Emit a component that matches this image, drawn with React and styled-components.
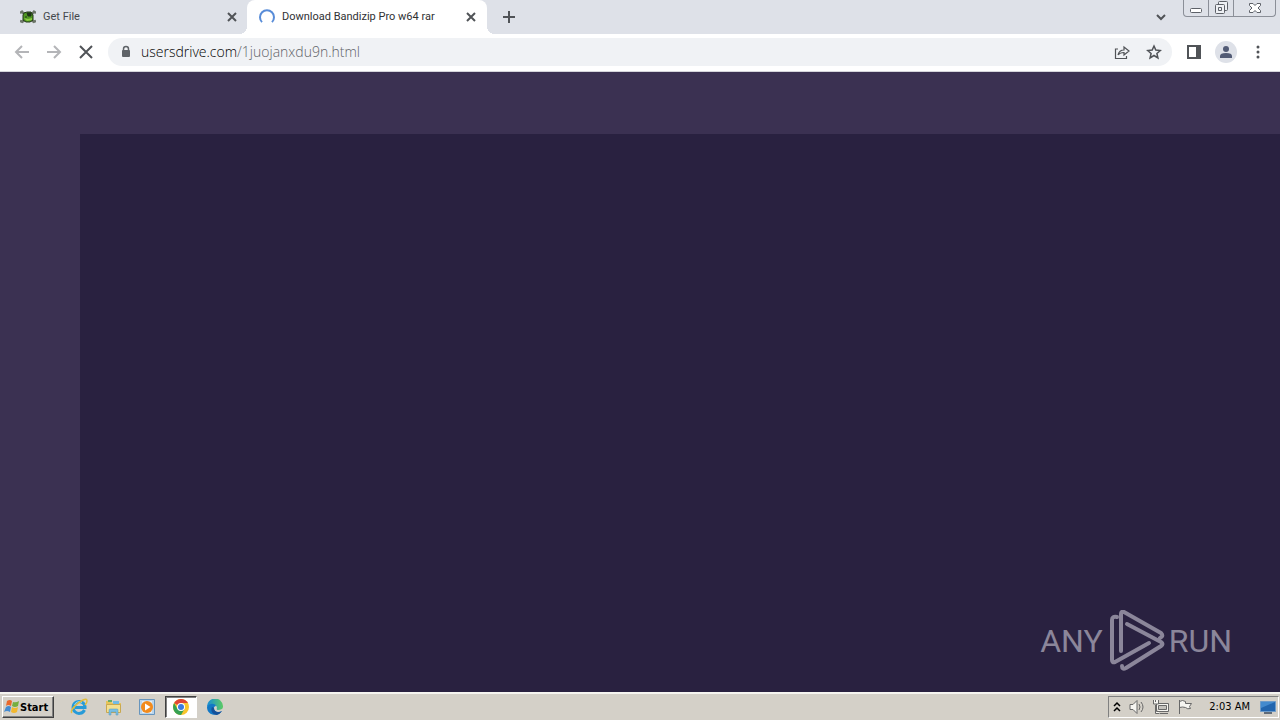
import React from "react";
import styled, { createGlobalStyle } from "styled-components";

const Global = createGlobalStyle`
  *, *::before, *::after { box-sizing: border-box; }
  body { margin: 0; font-family: "DejaVu Sans Condensed", "DejaVu Sans", sans-serif; font-size: 11px; }
  button { font: inherit; color: inherit; border: 0; padding: 0; background: transparent; }
  svg { display: block; flex: none; }
`;

const Desktop = styled.div`
  display: flex;
  flex-direction: column;
  min-height: 100vh;
  background: #292140;
`;

const TabStrip = styled.div`
  display: flex;
  height: 34px;
  background: #dee1e8;
`;

const Tab = styled.div`
  position: relative;
  display: flex;
  align-items: center;
  flex: 0 1 ${(p) => (p.$active ? 240 : 247)}px;
  min-width: 0;
  padding: 0 ${(p) => (p.$active ? 8 : 7)}px 0 ${(p) => (p.$active ? 12 : 20)}px;
  gap: 7px;
  color: ${(p) => (p.$active ? "#303134" : "#45484c")};
  background: ${(p) => (p.$active ? "#fff" : "transparent")};
  border-radius: 8px 8px 0 0;
  &::before, &::after {
    content: "";
    display: ${(p) => (p.$active ? "block" : "none")};
    position: absolute;
    bottom: 0;
    width: 8px;
    height: 8px;
  }
  &::before { left: -8px; background: radial-gradient(circle at 0 0, transparent 8px, #fff 8px); }
  &::after { right: -8px; background: radial-gradient(circle at 100% 0, transparent 8px, #fff 8px); }
`;

const TabTitle = styled.span`
  flex: 1;
  overflow: hidden;
  white-space: nowrap;
  font-family: Roboto, sans-serif;
  font-size: 11px;
  line-height: 16px;
`;

const IconButton = styled.button`
  display: grid;
  place-items: center;
  flex: none;
  width: ${(p) => p.$size || 16}px;
  height: ${(p) => p.$size || 16}px;
`;

const NewTab = styled(IconButton)`
  margin: 3px 0 0 8px;
`;

const TabSearch = styled(IconButton)`
  margin: 3px 8px 0 auto;
`;

const WindowControls = styled.div`
  display: flex;
  align-self: flex-start;
  height: 17px;
  margin-right: 4px;
  color: #5d6168;
  border: 1px solid #8b8f98;
  border-top: 0;
  border-radius: 0 0 4px 4px;
`;

const WindowButton = styled.button`
  display: grid;
  place-items: center;
  width: ${(p) => p.$width}px;
  & + & { border-left: 1px solid #8b8f98; }
`;

const Toolbar = styled.div`
  display: flex;
  align-items: center;
  height: 38px;
  padding: 0 6px 2px;
  background: #fff;
  border-bottom: 1px solid #d5d5db;
`;

const AddressBar = styled.div`
  display: flex;
  align-items: center;
  flex: 1;
  height: 28px;
  margin: 0 6px;
  padding: 0 2px 0 12px;
  border-radius: 14px;
  background: #f0f2f5;
`;

const Address = styled.a`
  flex: 1;
  margin-left: 9px;
  color: #5f6368;
  font-family: "Open Sans", sans-serif;
  font-size: 14px;
  font-weight: 300;
  line-height: 20px;
  text-decoration: none;
`;

const Host = styled.span`
  color: #000;
`;

const Avatar = styled.button`
  display: grid;
  place-items: center;
  width: 22px;
  height: 22px;
  margin: 0 5px;
  border-radius: 50%;
  background: #dee1e8;
`;

const Page = styled.main`
  position: relative;
  flex: 1;
  padding: 62px 0 0 80px;
  display: flex;
  background: #3b3152;
`;

const PageBody = styled.section`
  flex: 1;
  background: #292140;
`;

const Watermark = styled.div`
  position: absolute;
  right: 48px;
  bottom: 20px;
  display: flex;
  align-items: center;
  gap: 4px;
  color: #8b869a;
  font-family: Roboto, "Liberation Sans", sans-serif;
  font-size: 32px;
  line-height: 62px;
`;

const Taskbar = styled.footer`
  display: flex;
  align-items: center;
  height: 28px;
  padding: 0 1px 0 2px;
  color: #000;
  background: #d4d0c8;
  border-top: 2px solid #f5f4f0;
`;

const StartButton = styled.button`
  display: flex;
  align-items: center;
  width: 52px;
  height: 22px;
  padding: 0 1px;
  font-family: "DejaVu Sans Condensed", sans-serif;
  font-size: 11px;
  font-weight: 700;
  border: 1px solid;
  border-color: #fff #404040 #404040 #fff;
  box-shadow: inset -1px -1px 0 #808080;
`;

const Launchers = styled.nav`
  display: flex;
  gap: 2px;
  margin-left: 9px;
`;

const Launcher = styled.button`
  display: grid;
  place-items: center;
  width: 32px;
  height: 22px;
  ${(p) =>
    p.$pressed &&
    "background: #fff; border: 1px solid; border-color: #404040 #fff #fff #404040; box-shadow: inset 1px 1px 0 #808080;"}
`;

const Tray = styled.div`
  display: flex;
  align-items: center;
  height: 22px;
  margin-left: auto;
  padding: 0 2px 0 4px;
  gap: 8px;
  border: 1px solid;
  border-color: #808080 #fff #fff #808080;
`;

const Clock = styled.time`
  margin: 0 2px 0 8px;
  font-family: "DejaVu Sans Condensed", sans-serif;
  font-size: 11px;
  line-height: 16px;
  white-space: nowrap;
`;

const Line = ({ d, size = 16, color = "#505357", width = 2, ...rest }) => (
  <svg width={size} height={size} viewBox={`0 0 ${size} ${size}`} fill="none" stroke={color} strokeWidth={width} {...rest}>
    <path d={d} />
  </svg>
);

const Frog = () => (
  <svg width="16" height="16" viewBox="0 0 16 16">
    <path d="M2 3l4 3M14 3l-4 3M2 13l4-3M14 13l-4-3M0 4l3-2M13 2l3 2M0 12l3 1M13 13l3-1" stroke="#6c7568" strokeWidth="2.5" />
    <path d="M4 4L7 3h4l2 3v5l-3 2H6l-3-2V6z" fill="#4f9720" stroke="#243719" />
    <path d="M4 9l3 3 5-1v-2l-4 1z" fill="#8ccc41" />
    <path d="M7 4h4v3H8zM5 8h2" fill="#1f3318" stroke="#1f3318" />
  </svg>
);

const Spinner = () => (
  <svg width="16" height="16" viewBox="0 0 16 16">
    <path d="M3 13.1A7 7 0 1 1 13 13.1" fill="none" stroke="#588cd8" strokeWidth="2" />
  </svg>
);

const WindowsFlag = () => (
  <svg width="16" height="16" viewBox="0 0 16 16">
    <path d="M3 2q3-2 5 0L7 7Q4 5 2 7z" fill="#e9682c" />
    <path d="M9 3q3 1 6-1l-1 5q-3 2-6 0z" fill="#76ae40" />
    <path d="M2 8q3-2 5 0l-1 5q-3-2-6 0z" fill="#448bd1" />
    <path d="M8 8q3 2 6 0l-1 5q-3 2-6 0z" fill="#f2b82f" />
  </svg>
);

const Explorer = () => (
  <svg width="18" height="18" viewBox="0 0 18 18" fill="none">
    <path d="M14.5 12A6 6 0 1 1 15 8.5v1H5" stroke="#279bd8" strokeWidth="3" />
    <path d="M4.5 7A5 5 0 0 1 12 4.5" stroke="#8fd9f5" />
    <path d="M2 15C-1 13 7 5 13 2q4-2 4 1 0 2-2 4" stroke="#e3bd3b" strokeWidth="1.5" />
  </svg>
);

const Folder = () => (
  <svg width="17" height="17" viewBox="0 0 17 17">
    <path d="M1 2h5l1 2h9v8H1z" fill="#e7c458" />
    <path d="M3 1h4v2H3z" fill="#65aa69" />
    <path d="M8 2h6v4H8z" fill="#72bbe5" />
    <path d="M1.5 5.5h14v8h-14z" fill="#f4df90" stroke="#c9a850" />
    <path d="M4 16v-5q0-1 1-1h7q1 0 1 1v5h-2v-3H6v3z" fill="#79bfe2" stroke="#5599bd" strokeWidth=".5" />
  </svg>
);

const MediaPlayer = () => (
  <svg width="16" height="16" viewBox="0 0 16 16">
    <path d="M.5.5h15v15H.5z" fill="#b9d5ec" stroke="#6795bd" />
    <path d="M3 2h10v12H3z" fill="#e4edf4" />
    <circle cx="8" cy="8" r="6" fill="#f28b1d" />
    <path d="M6 4.5v7L11.5 8z" fill="#fff" />
  </svg>
);

const Chrome = () => (
  <svg width="16" height="16" viewBox="0 0 16 16">
    <circle cx="8" cy="8" r="8" fill="#f9c52c" />
    <path d="M8 8L1.1 4A8 8 0 0 1 15 4H8z" fill="#df4636" />
    <path d="M1.1 4A8 8 0 0 0 8 16l3.5-6L8 8 4.5 10z" fill="#35a153" />
    <circle cx="8" cy="8" r="4" fill="#fff" />
    <circle cx="8" cy="8" r="3" fill="#3c7be0" />
  </svg>
);

const Edge = () => (
  <svg width="16" height="16" viewBox="0 0 16 16">
    <defs>
      <linearGradient id="edgeTop" x2="1"><stop stopColor="#168cd8" /><stop offset="1" stopColor="#5dcb63" /></linearGradient>
    </defs>
    <path d="M0 8a8 8 0 0 1 16-1c.3 3-2 4-5 4q-2 0-1-2C10 5 3 4 0 8z" fill="url(#edgeTop)" />
    <path d="M0 8c2-4 8-4 9-1-3 0-3 5 1 6q2 1 5-1C11 18 0 17 0 8z" fill="#1278c5" />
    <path d="M5 8c-2 4 1 8 5 8q3-1 5-4c-4 2-8 1-8-3z" fill="#15519a" />
  </svg>
);

const TrayIcon = ({ children }) => (
  <svg width="16" height="16" viewBox="0 0 16 16" fill="#f6f5f1" stroke="#686868">{children}</svg>
);

const PlayLogo = () => (
  <svg width="58" height="62" viewBox="-2 0 58 62" fill="none" stroke="currentColor" strokeWidth="4" strokeLinecap="round" strokeLinejoin="round">
    <path d="M12 41V4q0-3 3-2l37 21q3 3-1 5" />
    <path d="M8 7Q3 6 3 10v40q0 3 3 2l34-19" />
    <path d="M18 14l34 18q3 2 0 4L17 58q-4 2-4-2" />
  </svg>
);

export default function App() {
  return (
    <Desktop>
      <Global />
      <TabStrip>
        <Tab>
          <Frog />
          <TabTitle>Get File</TabTitle>
          <IconButton aria-label="Close tab"><Line d="M4 4l8 8M12 4l-8 8" /></IconButton>
        </Tab>
        <Tab $active>
          <Spinner />
          <TabTitle>Download Bandizip Pro w64 rar</TabTitle>
          <IconButton aria-label="Close tab"><Line d="M4 4l8 8M12 4l-8 8" /></IconButton>
        </Tab>
        <NewTab $size={28} aria-label="New tab"><Line d="M8 2v12M2 8h12" /></NewTab>
        <TabSearch $size={28} aria-label="Search tabs"><Line d="M4 6l4 4 4-4" /></TabSearch>
        <WindowControls>
          <WindowButton $width={24} aria-label="Minimize">
            <svg width="14" height="14" viewBox="0 0 14 14" fill="#fff" stroke="currentColor"><rect x="1.5" y="7.5" width="11" height="4" rx="1" /></svg>
          </WindowButton>
          <WindowButton $width={25} aria-label="Restore">
            <svg width="14" height="14" viewBox="0 0 14 14" fill="#eef0f4" stroke="currentColor"><rect x="4.5" y=".5" width="9" height="9" rx="1" /><rect x="1.5" y="3.5" width="9" height="9" rx="1" /><path d="M4.5 6.5h3v3h-3z" /></svg>
          </WindowButton>
          <WindowButton $width={42} aria-label="Close">
            <svg width="14" height="14" viewBox="0 0 14 14" fill="#fff" stroke="currentColor"><path d="M1.5 2.500h3.500l2 2 2-2h3.500v2L10 7l2.500 2.500v2H9l-2-2-2 2H1.500v-2L4 7 1.500 4.500z" /></svg>
          </WindowButton>
        </WindowControls>
      </TabStrip>

      <Toolbar>
        <IconButton $size={32} aria-label="Back"><Line color="#b4b5b8" d="M15 8H2M8 2L2 8l6 6" /></IconButton>
        <IconButton $size={32} aria-label="Forward"><Line color="#b4b5b8" d="M1 8h13M8 2l6 6-6 6" /></IconButton>
        <IconButton $size={32} aria-label="Stop loading"><Line d="M2 2l12 12M14 2L2 14" /></IconButton>
        <AddressBar>
          <svg width="12" height="14" viewBox="0 0 12 14">
            <path d="M3.500 6V4a2.500 2.500 0 0 1 5 0v2" fill="none" stroke="#5f6368" strokeWidth="1.500" />
            <rect x="2" y="5" width="8" height="7" rx="1" fill="#5f6368" />
          </svg>
          <Address href="#"><Host>usersdrive.com</Host>/1juojanxdu9n.html</Address>
          <IconButton $size={32} aria-label="Share">
            <Line width={1.2} d="M4 5H1.500v9.500h11V12M4 11c1-4 3-5 6-5V3l5 4-5 4V8.500Q6 8.500 4 11z" />
          </IconButton>
          <IconButton $size={32} aria-label="Bookmark">
            <Line width={1.500} d="M8 2l1.800 4.100 4.500.4-3.400 3 1 4.400L8 11.500 4.100 13.900l1-4.400-3.400-3 4.500-.4z" />
          </IconButton>
        </AddressBar>
        <IconButton $size={32} aria-label="Side panel">
          <svg width="14" height="14" viewBox="0 0 14 14"><path d="M1 1h12v12H1z" fill="none" stroke="#505357" strokeWidth="2" /><path d="M9 1h5v12H9z" fill="#505357" /></svg>
        </IconButton>
        <Avatar aria-label="Profile">
          <svg width="14" height="14" viewBox="0 0 14 14" fill="#525b75"><circle cx="7" cy="4" r="3" /><path d="M1 13v-2q0-3 6-3t6 3v2z" /></svg>
        </Avatar>
        <IconButton $size={32} aria-label="Menu">
          <svg width="16" height="16" viewBox="0 0 16 16" fill="#505357"><circle cx="8" cy="3" r="1.500" /><circle cx="8" cy="8" r="1.500" /><circle cx="8" cy="13" r="1.500" /></svg>
        </IconButton>
      </Toolbar>

      <Page>
        <PageBody />
        <Watermark><span>ANY</span><PlayLogo /><span>RUN</span></Watermark>
      </Page>

      <Taskbar>
        <StartButton><WindowsFlag />Start</StartButton>
        <Launchers aria-label="Quick launch">
          <Launcher aria-label="Internet Explorer"><Explorer /></Launcher>
          <Launcher aria-label="File Explorer"><Folder /></Launcher>
          <Launcher aria-label="Media Player"><MediaPlayer /></Launcher>
          <Launcher $pressed aria-label="Chrome"><Chrome /></Launcher>
          <Launcher aria-label="Edge"><Edge /></Launcher>
        </Launchers>
        <Tray>
          <svg width="8" height="12" viewBox="0 0 8 12" fill="none" stroke="#000" strokeWidth="1.500"><path d="M1 5l3-3 3 3M1 10l3-3 3 3" /></svg>
          <TrayIcon><path d="M1 5.500h3l4-4v13l-4-4H1z" /><path d="M10 5q2 3 0 6M12 3q4 5 0 10" fill="none" /></TrayIcon>
          <TrayIcon><path d="M3.500 4.500h12v8h-12zM7 14.500h8M2.500 6v8.500h4" /><path d="M5.500 6.500h8v4h-8z" fill="#c4c2bd" /><path d="M.5 1v4h5V1M2.500 1v2" /></TrayIcon>
          <TrayIcon><path d="M2.500 1v14M2.500 2.500q3-2 6 0v2h6l-2 3 1 2q-3 1-5-1-3-1-6 0z" /></TrayIcon>
          <Clock>2:03 AM</Clock>
          <svg width="16" height="16" viewBox="0 0 16 16"><path d="M.5 2.500h15v10H.5z" fill="#2265ae" stroke="#6d9bc9" /><path d="M1 3h14L1 9z" fill="#438ace" /><path d="M4 14h8" stroke="#606b78" strokeWidth="2" /></svg>
        </Tray>
      </Taskbar>
    </Desktop>
  );
}
